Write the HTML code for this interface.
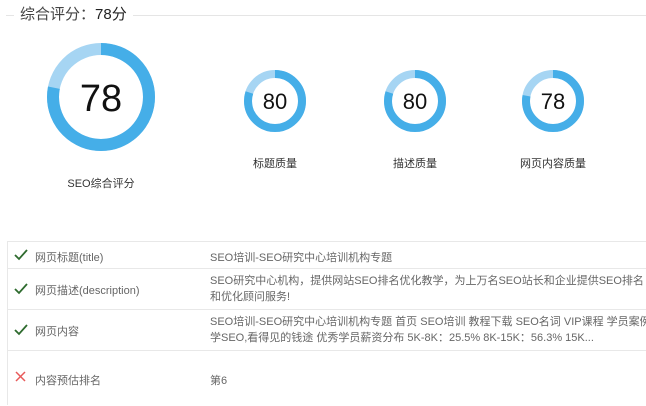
<!DOCTYPE html><html><head><meta charset="utf-8"><style>
body{margin:0;width:646px;height:405px;background:#fff;font-family:"Liberation Sans","Noto Sans CJK SC",sans-serif;position:relative;overflow:hidden}
.a{position:absolute}
.lbl{font-size:11px;color:#333;text-align:center;width:120px}
.row{position:absolute;left:7px;right:0;border-top:1px solid #e8e8e8;font-size:11px;color:#666}
.row span,.row svg{position:absolute}
</style></head><body>
<div class="a" style="left:6px;top:15px;width:640px;border-top:1px solid #e5e5e5"></div>
<div class="a" style="left:14px;top:5px;background:#fff;padding:0 6px;font-size:15px;color:#444;line-height:20px">综合评分：<span style="color:#222">78分</span></div>
<svg class="a" style="left:0;top:0" width="646" height="240">
<g fill="none">
<circle cx="101" cy="97" r="48" stroke="#a6d5f3" stroke-width="12"/>
<circle cx="101" cy="97" r="48" stroke="#45aee8" stroke-width="12" stroke-dasharray="235.2 400" transform="rotate(-90 101 97)"/>
<circle cx="275" cy="101" r="27" stroke="#a6d5f3" stroke-width="8"/>
<circle cx="275" cy="101" r="27" stroke="#45aee8" stroke-width="8" stroke-dasharray="135.7 400" transform="rotate(-90 275 101)"/>
<circle cx="415" cy="101" r="27" stroke="#a6d5f3" stroke-width="8"/>
<circle cx="415" cy="101" r="27" stroke="#45aee8" stroke-width="8" stroke-dasharray="135.7 400" transform="rotate(-90 415 101)"/>
<circle cx="553" cy="101" r="27" stroke="#a6d5f3" stroke-width="8"/>
<circle cx="553" cy="101" r="27" stroke="#45aee8" stroke-width="8" stroke-dasharray="132.3 400" transform="rotate(-90 553 101)"/>
</g>
<g font-family="Liberation Sans" fill="#111" text-anchor="middle">
<text x="101" y="111" font-size="38">78</text>
<text x="275" y="109" font-size="22">80</text>
<text x="415" y="109" font-size="22">80</text>
<text x="553" y="109" font-size="22">78</text>
</g></svg>
<div class="a lbl" style="left:41px;top:175px">SEO综合评分</div>
<div class="a lbl" style="left:215px;top:155px">标题质量</div>
<div class="a lbl" style="left:355px;top:155px">描述质量</div>
<div class="a lbl" style="left:493px;top:155px">网页内容质量</div>
<div class="a" style="left:7px;top:241px;bottom:0;border-left:1px solid #e8e8e8"></div>
<div class="row" style="top:241px;height:27px"><svg style="left:7px;top:7px" width="14" height="12"><path d="M1 6 L5 10 L13 1" fill="none" stroke="#2e6b2e" stroke-width="1.8"/></svg><span style="left:28px;top:7px">网页标题(title)</span><span style="left:203px;top:7px">SEO培训-SEO研究中心培训机构专题</span></div>
<div class="row" style="top:268px;height:41px"><svg style="left:7px;top:14px" width="14" height="12"><path d="M1 6 L5 10 L13 1" fill="none" stroke="#2e6b2e" stroke-width="1.8"/></svg><span style="left:28px;top:13px">网页描述(description)</span><span style="left:203px;top:4px;line-height:16px;width:440px">SEO研究中心机构，提供网站SEO排名优化教学，为上万名SEO站长和企业提供SEO排名和优化顾问服务!</span></div>
<div class="row" style="top:309px;height:41px"><svg style="left:7px;top:14px" width="14" height="12"><path d="M1 6 L5 10 L13 1" fill="none" stroke="#2e6b2e" stroke-width="1.8"/></svg><span style="left:28px;top:13px">网页内容</span><span style="left:203px;top:4px;line-height:16px;width:445px;white-space:nowrap">SEO培训-SEO研究中心培训机构专题 首页 SEO培训 教程下载 SEO名词 VIP课程 学员案例<br>学SEO,看得见的钱途 优秀学员薪资分布 5K-8K：25.5% 8K-15K：56.3% 15K...</span></div>
<div class="row" style="top:350px;height:55px"><svg style="left:8px;top:20px" width="11" height="11"><path d="M1 1 L10 10 M10 1 L1 10" stroke="#e85a5a" stroke-width="1.5"/></svg><span style="left:28px;top:21px">内容预估排名</span><span style="left:203px;top:21px">第6</span></div>
</body></html>
